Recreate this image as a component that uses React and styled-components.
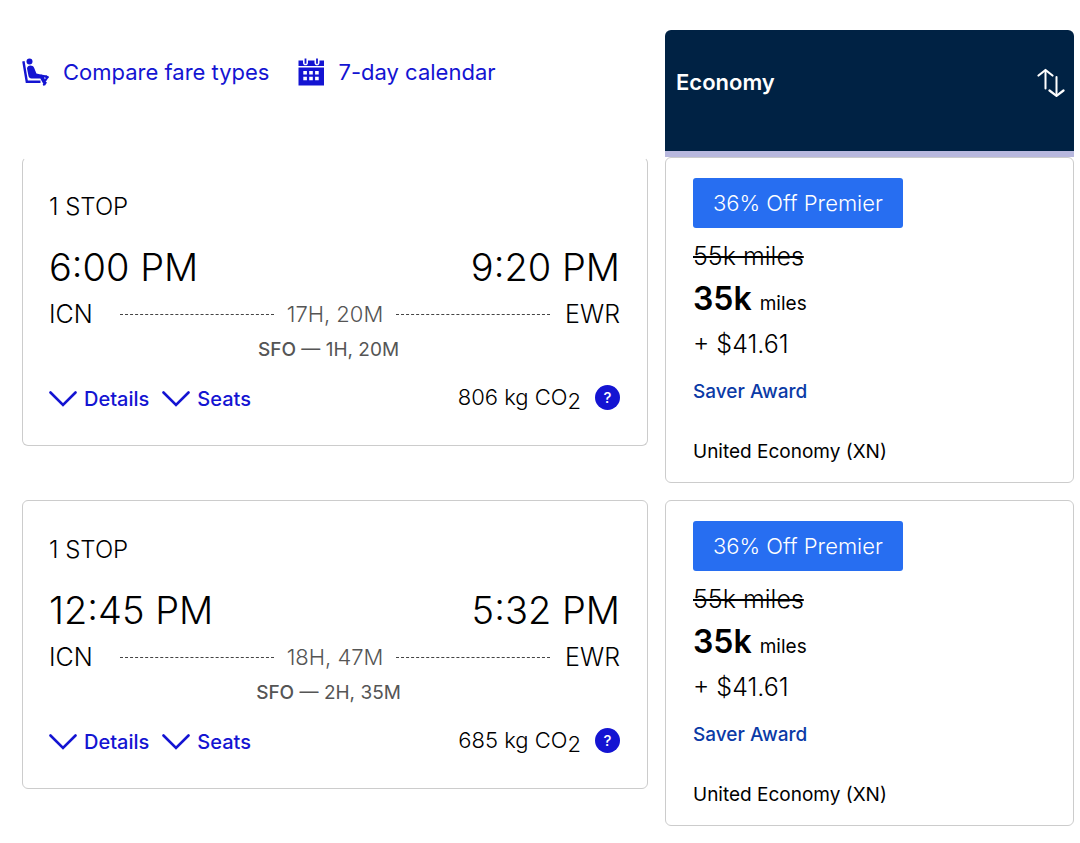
import styled, { createGlobalStyle } from 'styled-components';

const GlobalStyle = createGlobalStyle`
    * {
        box-sizing: border-box;
    }

    body {
        margin: 0;
        background: #fff;
        color: #000;
        font-family: Inter, "Liberation Sans", sans-serif;
    }

    button {
        padding: 0;
        border: none;
        background: none;
        color: inherit;
        font: inherit;
        cursor: pointer;
    }
`;

const Page = styled.main`
    display: grid;
    grid-template-columns: minmax(0, 626fr) minmax(0, 409fr);
    column-gap: 17px;
    align-items: start;
    padding: 30px 6px 16px 22px;
`;

const Toolbar = styled.nav`
    display: flex;
    gap: 28px;
    padding-top: 26px;
`;

const ToolLink = styled.a`
    display: flex;
    align-items: center;
    gap: 14px;
    color: #1414d2;
    font-size: 22px;
    line-height: 32px;
    text-decoration: none;
    white-space: nowrap;
`;

const ColumnHeader = styled.div`
    display: flex;
    justify-content: space-between;
    padding: 36px 9px 53px 11px;
    border-bottom: 6px solid #b8b8de;
    border-radius: 6px 6px 0 0;
    background: #002244;
    color: #fff;
`;

const ColumnTitle = styled.h2`
    margin: 0;
    font-size: 22px;
    font-weight: 600;
    line-height: 32px;
`;

const SortButton = styled.button`
    display: flex;
    align-items: center;
`;

const Card = styled.section`
    border: 1px solid #ccc;
    border-top-color: ${(props) => (props.$openTop ? 'transparent' : '#ccc')};
    border-radius: 6px;
`;

const FlightCard = styled(Card)`
    padding: 33px 27px 28px 26px;
`;

const FareCard = styled(Card)`
    padding: 20px 27px 16px;
    margin-bottom: 17px;
`;

const Spread = styled.div`
    display: flex;
    align-items: center;
    justify-content: space-between;
`;

const Stops = styled.div`
    font-size: 24px;
    font-weight: 300;
    line-height: 32px;
`;

const Times = styled(Spread)`
    margin-top: 20px;
    font-size: 38px;
    font-weight: 300;
    line-height: 48px;
`;

const Route = styled.div`
    display: flex;
    align-items: center;
    font-size: 25px;
    font-weight: 300;
    line-height: 46px;
`;

const Dashes = styled.span`
    flex: 1;
    border-top: 1px dashed #444;
`;

const Duration = styled.span`
    padding: 0 13px;
    color: #555;
    font-size: 22px;
`;

const Airport = styled.span`
    width: ${(props) => (props.$end ? '70px' : '71px')};
    text-align: ${(props) => (props.$end ? 'right' : 'left')};
`;

const Layover = styled.div`
    padding-right: 12px;
    color: #555;
    font-size: 19px;
    line-height: 26px;
    text-align: center;

    b {
        font-weight: 500;
    }
`;

const CardFooter = styled(Spread)`
    align-items: flex-start;
    margin-top: 18px;
`;

const Toggles = styled.div`
    display: flex;
    gap: 13px;
`;

const Toggle = styled.button`
    display: flex;
    align-items: center;
    gap: 7px;
    color: #1414d2;
    font-size: 20px;
    font-weight: 500;
    line-height: 36px;
`;

const Emissions = styled.div`
    display: flex;
    align-items: center;
    gap: 14px;
    font-size: 22px;
    font-weight: 300;
    line-height: 32px;

    sub {
        font-size: 22px;
        line-height: 0;
        vertical-align: -4px;
    }
`;

const HelpButton = styled.button`
    width: 25px;
    height: 25px;
    border-radius: 50%;
    background: #1414d2;
    color: #fff;
    font-size: 15px;
    font-weight: 500;
    line-height: 25px;
`;

const Badge = styled.div`
    width: fit-content;
    padding: 0 20px;
    border-radius: 3px;
    background: #276ef1;
    color: #fff;
    font-size: 22px;
    font-weight: 300;
    line-height: 50px;
`;

const OldPrice = styled.s`
    display: block;
    margin-top: 10px;
    font-size: 25px;
    font-weight: 300;
    line-height: 36px;
    text-decoration-thickness: 2px;
`;

const Price = styled.div`
    display: flex;
    align-items: baseline;
    gap: 8px;
    font-size: 19px;
    line-height: 50px;

    strong {
        font-size: 32px;
        font-weight: 600;
    }
`;

const Tax = styled.div`
    font-size: 25px;
    font-weight: 300;
    line-height: 30px;
`;

const Award = styled.div`
    margin-top: 19px;
    color: #0b3aa6;
    font-size: 19px;
    font-weight: 500;
    line-height: 28px;
`;

const Cabin = styled.div`
    margin-top: 32px;
    font-size: 19px;
    line-height: 28px;
`;

const flights = [
    { depart: '6:00 PM', arrive: '9:20 PM', duration: '17H, 20M', layover: '1H, 20M', co2: 806 },
    { depart: '12:45 PM', arrive: '5:32 PM', duration: '18H, 47M', layover: '2H, 35M', co2: 685 },
];

const SeatIcon = () => (
    <svg width="27" height="28" viewBox="0 0 27 28" fill="none" aria-hidden="true">
        <path d="M1.400 3.200 4.800 23.700h13.700" stroke="#1414d2" strokeWidth="2.400" />
        <circle cx="7.500" cy="3.400" r="3" fill="#1414d2" />
        <path
            d="M5 10.500C5 7 10.800 6.500 12.200 10l2.200 5.500 5.400 1.200c1 .3 1.500.9 1.900 1.700l2.800 6.800-2.700 1.600-3.500-6.300H9.500c-1.700 0-2.600-.9-3-2.500z"
            fill="#1414d2"
        />
        <path d="M18.500 17.500l4.500.8 2.300 1.200-2.300 3.500" stroke="#1414d2" strokeWidth="2.200" />
        <path d="M21 27l1.700-.6 1.300-2.600M23.500 17.800l3 1.700" stroke="#1414d2" strokeWidth="1.800" />
    </svg>
);

const CalendarIcon = () => (
    <svg width="27" height="28" viewBox="0 0 27 28" fill="#1414d2" aria-hidden="true">
        <path d="M.500 2.500h4.500v2.200c0 3.400 5 3.400 5 0V2.500h6.500v2.200c0 3.400 5 3.400 5 0V2.500H26v5.500H.500z" />
        <path d="M6.600.500h1.800v5.200H6.600zM18.100.500h1.800v5.200h-1.800z" />
        <path d="M.500 9.500H26V27.500H.500z" />
        <path
            fill="#fff"
            d="M5.300 13h3.600v3.600H5.300zM11.200 13h3.600v3.600h-3.600zM17.100 13h3.600v3.600h-3.600zM5.300 18.700h3.600v3.600H5.300zM11.200 18.700h3.600v3.600h-3.600zM17.100 18.700h3.600v3.600h-3.600z"
        />
    </svg>
);

const SortIcon = () => (
    <svg
        width="28"
        height="30"
        viewBox="0 0 28 30"
        fill="none"
        stroke="#fff"
        strokeWidth="2.200"
        strokeLinecap="round"
        strokeLinejoin="round"
        aria-hidden="true"
    >
        <path d="M1.500 8.500 8.500 3l7 5.500M12.500 23.500l7 5.300 7-5.300" />
        <path d="M8.500 3.500v18M19.500 10v18" strokeWidth="2" />
    </svg>
);

const ChevronIcon = () => (
    <svg
        width="28"
        height="16"
        viewBox="0 0 28 16"
        fill="none"
        stroke="#1414d2"
        strokeWidth="2.600"
        strokeLinecap="round"
        aria-hidden="true"
    >
        <path d="M1.500 1.500 14 14 26.500 1.500" />
    </svg>
);

const Flight = ({ flight, openTop }) => (
    <FlightCard $openTop={openTop}>
        <Stops>1 STOP</Stops>
        <Times>
            <span>{flight.depart}</span>
            <span>{flight.arrive}</span>
        </Times>
        <Route>
            <Airport>ICN</Airport>
            <Dashes />
            <Duration>{flight.duration}</Duration>
            <Dashes />
            <Airport $end>EWR</Airport>
        </Route>
        <Layover><b>SFO</b> — {flight.layover}</Layover>
        <CardFooter>
            <Toggles>
                <Toggle type="button"><ChevronIcon />Details</Toggle>
                <Toggle type="button"><ChevronIcon />Seats</Toggle>
            </Toggles>
            <Emissions>
                <span>{flight.co2} kg CO<sub>2</sub></span>
                <HelpButton type="button">?</HelpButton>
            </Emissions>
        </CardFooter>
    </FlightCard>
);

const Fare = () => (
    <FareCard>
        <Badge>36% Off Premier</Badge>
        <OldPrice>55k miles</OldPrice>
        <Price><strong>35k</strong> miles</Price>
        <Tax>+ $41.61</Tax>
        <Award>Saver Award</Award>
        <Cabin>United Economy (XN)</Cabin>
    </FareCard>
);

const App = () => {
    return (
        <>
            <GlobalStyle />
            <Page>
                <Toolbar>
                    <ToolLink href="#fares"><SeatIcon />Compare fare types</ToolLink>
                    <ToolLink href="#calendar"><CalendarIcon />7-day calendar</ToolLink>
                </Toolbar>
                <ColumnHeader>
                    <ColumnTitle>Economy</ColumnTitle>
                    <SortButton type="button" aria-label="Sort by Economy"><SortIcon /></SortButton>
                </ColumnHeader>
                {flights.map((flight, index) => [
                    <Flight key={flight.depart} flight={flight} openTop={index === 0} />,
                    <Fare key={flight.depart + '-fare'} />,
                ])}
            </Page>
        </>
    );
}

export default App;
